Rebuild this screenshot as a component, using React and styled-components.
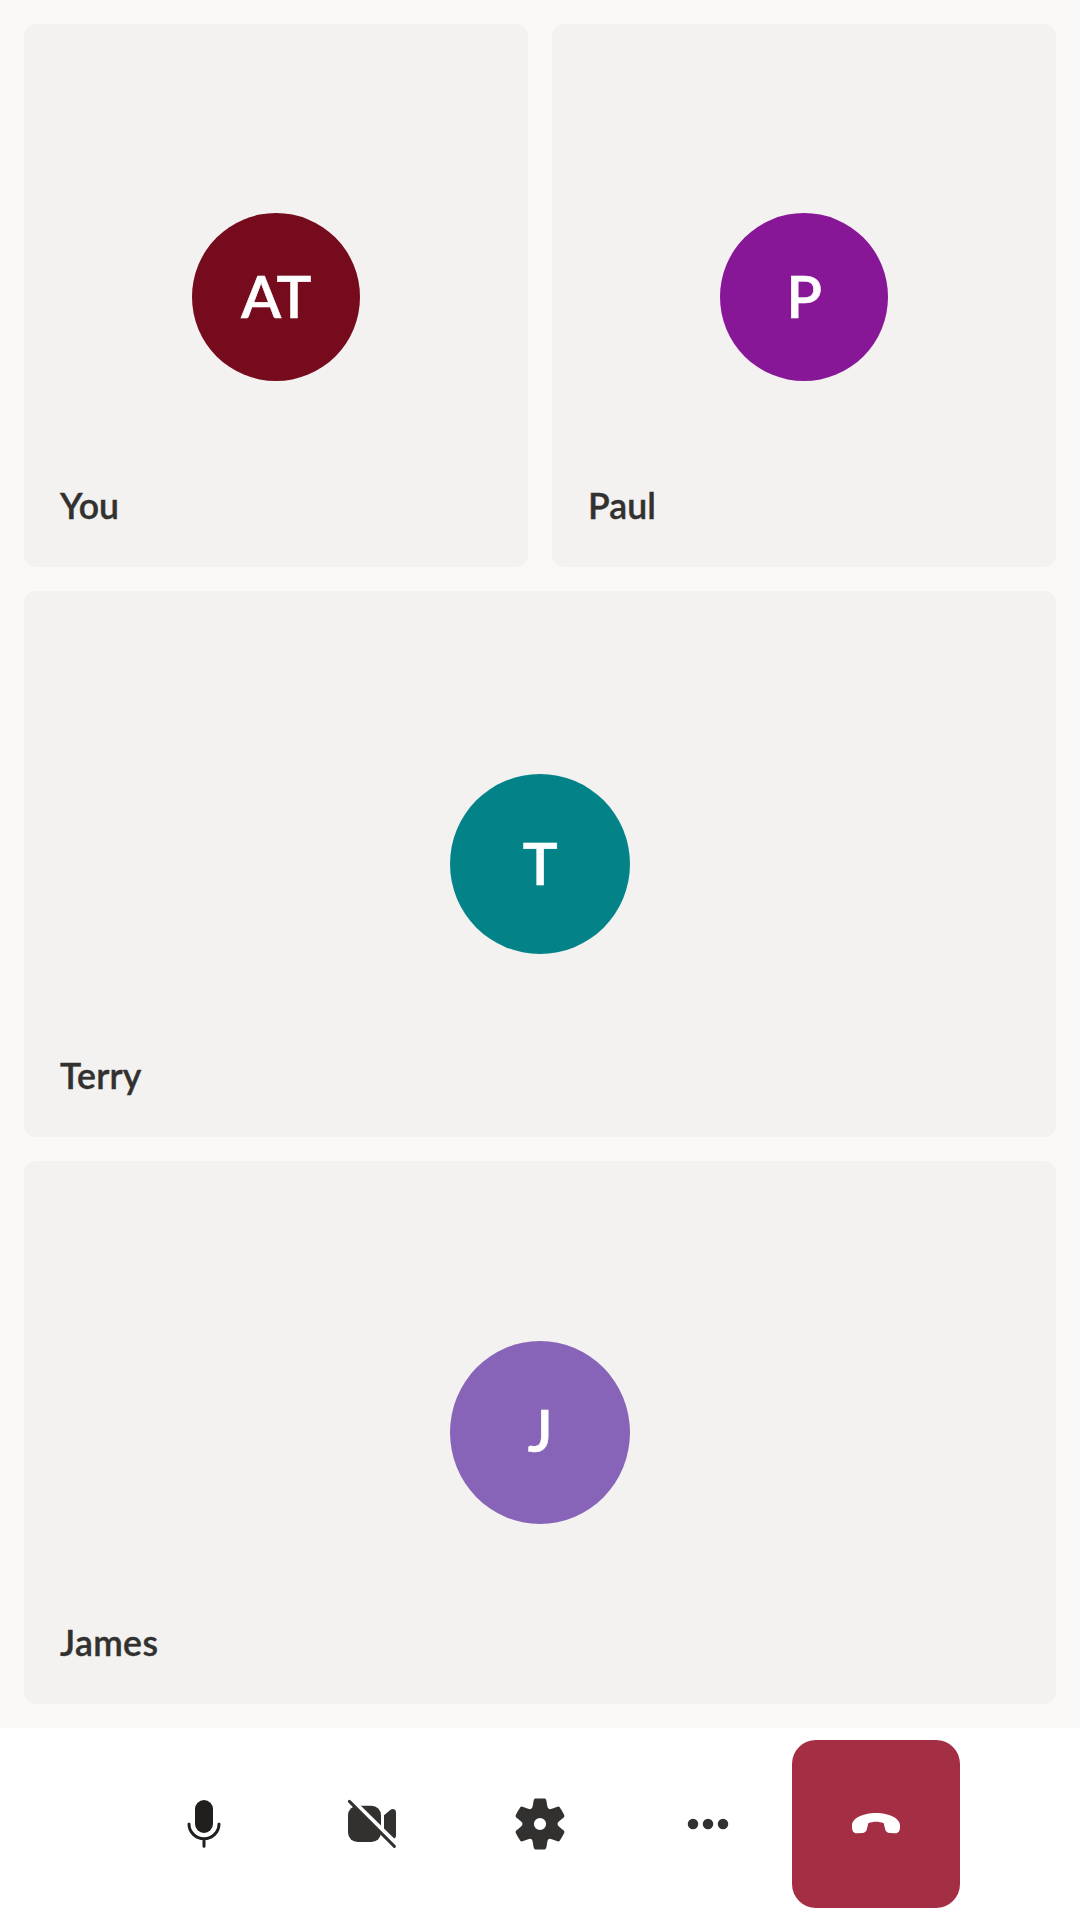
import React from 'react';
import styled, { createGlobalStyle } from 'styled-components';

const GlobalStyle = createGlobalStyle`
  *, *::before, *::after { box-sizing: border-box; }
  body { margin: 0; background: #faf9f8; }
`;

const CallScreen = styled.div`
  display: flex;
  flex-direction: column;
  width: 1080px;
  height: 1920px;
  background: #faf9f8;
  color: #323130;
  font-family: Lato, 'Open Sans', sans-serif;
  overflow: hidden;
`;

const Gallery = styled.main`
  display: grid;
  grid-template-columns: repeat(2, 1fr);
  grid-template-rows: 543px 546px 543px;
  gap: 24px;
  padding: 24px;
  height: 1728px;
`;

const Tile = styled.section`
  display: grid;
  grid-template: 1fr / 1fr;
  grid-column: ${(p) => (p.$wide ? 'span 2' : 'auto')};
  padding-top: ${(p) => (p.$wide ? 0 : 3)}px;
  border-radius: 12px;
  background: #f3f2f1;
`;

const Avatar = styled.div`
  grid-area: 1 / 1;
  place-self: center;
  display: flex;
  align-items: center;
  justify-content: center;
  width: ${(p) => p.$width}px;
  height: ${(p) => p.$height}px;
  padding-bottom: ${(p) => p.$lift}px;
  border-radius: 50%;
  background: ${(p) => p.$color};
  color: #fff;
  font-size: 58.6px;
  font-weight: 600;
  line-height: 1.2;
  letter-spacing: -0.5px;
  -webkit-text-stroke: 0.5px currentColor;
`;

const Name = styled.div`
  grid-area: 1 / 1;
  align-self: end;
  padding: 0 36px 37px;
  font-size: 35.6px;
  font-weight: 600;
  line-height: 48px;
  letter-spacing: ${(p) => p.$tracking || 0}px;
  -webkit-text-stroke: 0.4px currentColor;
`;

const ControlBar = styled.nav`
  display: flex;
  justify-content: flex-start;
  height: 192px;
  padding: 12px 120px;
  background: #fff;
`;

const ControlButton = styled.button`
  display: flex;
  align-items: center;
  justify-content: center;
  width: 168px;
  height: 168px;
  padding: 0;
  border: 0;
  border-radius: 24px;
  background: ${(p) => (p.$danger ? '#a42e43' : 'transparent')};
  color: ${(p) => (p.$danger ? '#fff' : '#323130')};
`;

const Icon = styled.svg`
  display: block;
  width: 48px;
  height: 48px;
  overflow: visible;
  fill: currentColor;
`;

const MicIcon = () => (
  <Icon viewBox="0 0 48 48" color="#201f1e">
    <rect x="15" y="0" width="18" height="33" rx="9" />
    <path
      d="M9 23.9a15 14.8 0 0 0 30 0M24 38.7v7.6"
      fill="none"
      stroke="currentColor"
      strokeWidth="3"
      strokeLinecap="round"
    />
  </Icon>
);

const VideoOffIcon = () => (
  <Icon viewBox="0 0 48 48">
    <rect x="0" y="5.8" width="33" height="36.2" rx="9.5" />
    <path d="M36 15.2l6.3-5.3C44.5 8 48 9.3 48 12.2v23.6c0 2.9-3.5 4.2-5.7 2.3L36 32.8z" />
    <path d="M2.4 -1.4L50 45.4" fill="none" stroke="#fff" strokeWidth="4.4" />
    <path
      d="M1.4 1.4L46.4 46.4"
      fill="none"
      stroke="currentColor"
      strokeWidth="3"
      strokeLinecap="round"
    />
  </Icon>
);

const TOOTH = [
  [-6.3, -23.8], [-6, -25.1], [-4.6, -25.4], [0, -25.8],
  [4.6, -25.4], [6, -25.1], [6.3, -23.8], [7.3, -17.9],
  [7.9, -13.7], [11.85, -15.27],
];

const gearPath = () => {
  const parts = Array.from({ length: 6 }, (_, i) => {
    const a = (i * Math.PI) / 3;
    const p = TOOTH.map(([x, y]) =>
      [x * Math.cos(a) - y * Math.sin(a), x * Math.sin(a) + y * Math.cos(a)]
        .map((n) => n.toFixed(2))
        .join(' ')
    );
    return `${i ? 'L' : 'M'}${p[0]}Q${p[1]} ${p[2]}Q${p[3]} ${p[4]}Q${p[5]} ${p[6]}L${p[7]}Q${p[8]} ${p[9]}`;
  });
  return `${parts.join('')}ZM-6.1 0a6.1 6.1 0 1 0 12.2 0a6.1 6.1 0 1 0 -12.2 0Z`;
};

const SettingsIcon = () => (
  <Icon viewBox="-24 -24 48 48">
    <path d={gearPath()} fillRule="evenodd" />
  </Icon>
);

const MoreIcon = () => (
  <Icon viewBox="0 0 48 48">
    <circle cx="9" cy="24" r="5.25" />
    <circle cx="24" cy="24" r="5.25" />
    <circle cx="39" cy="24" r="5.25" />
  </Icon>
);

const HangUpIcon = () => (
  <Icon viewBox="0 0 48 48">
    <path d="M0 25.4C0 18.2 11.2 13 24 13s24 5.2 24 12.4v1.9c0 3.9-1.7 6.2-5 6l-5.2-.4c-2.7-.2-4.1-1.5-4.7-4l-1.4-5.6c-2.4-1-4.9-1.5-7.7-1.5s-5.3.5-7.7 1.5l-1.4 5.6c-.6 2.5-2 3.8-4.7 4l-5.2.4c-3.3.2-5-2.1-5-6z" />
  </Icon>
);

const PARTICIPANTS = [
  { name: 'You', initials: 'AT', color: '#750b1c', width: 168, height: 168, lift: 3 },
  { name: 'Paul', initials: 'P', color: '#881798', width: 168, height: 168, lift: 3, tracking: 0.1 },
  { name: 'Terry', initials: 'T', color: '#038387', width: 180, height: 180, lift: 3, wide: true, tracking: 0.2 },
  { name: 'James', initials: 'J', color: '#8764b8', width: 180, height: 183, lift: 6, wide: true, tracking: 0.4 },
];

const CONTROLS = [
  { label: 'Mute', Glyph: MicIcon },
  { label: 'Turn camera on', Glyph: VideoOffIcon },
  { label: 'Settings', Glyph: SettingsIcon },
  { label: 'More options', Glyph: MoreIcon },
  { label: 'Leave', Glyph: HangUpIcon, danger: true },
];

export default function App() {
  return (
    <>
      <GlobalStyle />
      <CallScreen>
        <Gallery>
          {PARTICIPANTS.map((p) => (
            <Tile key={p.name} $wide={p.wide}>
              <Avatar $width={p.width} $height={p.height} $color={p.color} $lift={p.lift}>
                {p.initials}
              </Avatar>
              <Name $tracking={p.tracking}>{p.name}</Name>
            </Tile>
          ))}
        </Gallery>
        <ControlBar>
          {CONTROLS.map(({ label, Glyph, danger }) => (
            <ControlButton key={label} type="button" aria-label={label} $danger={danger}>
              <Glyph />
            </ControlButton>
          ))}
        </ControlBar>
      </CallScreen>
    </>
  );
}
